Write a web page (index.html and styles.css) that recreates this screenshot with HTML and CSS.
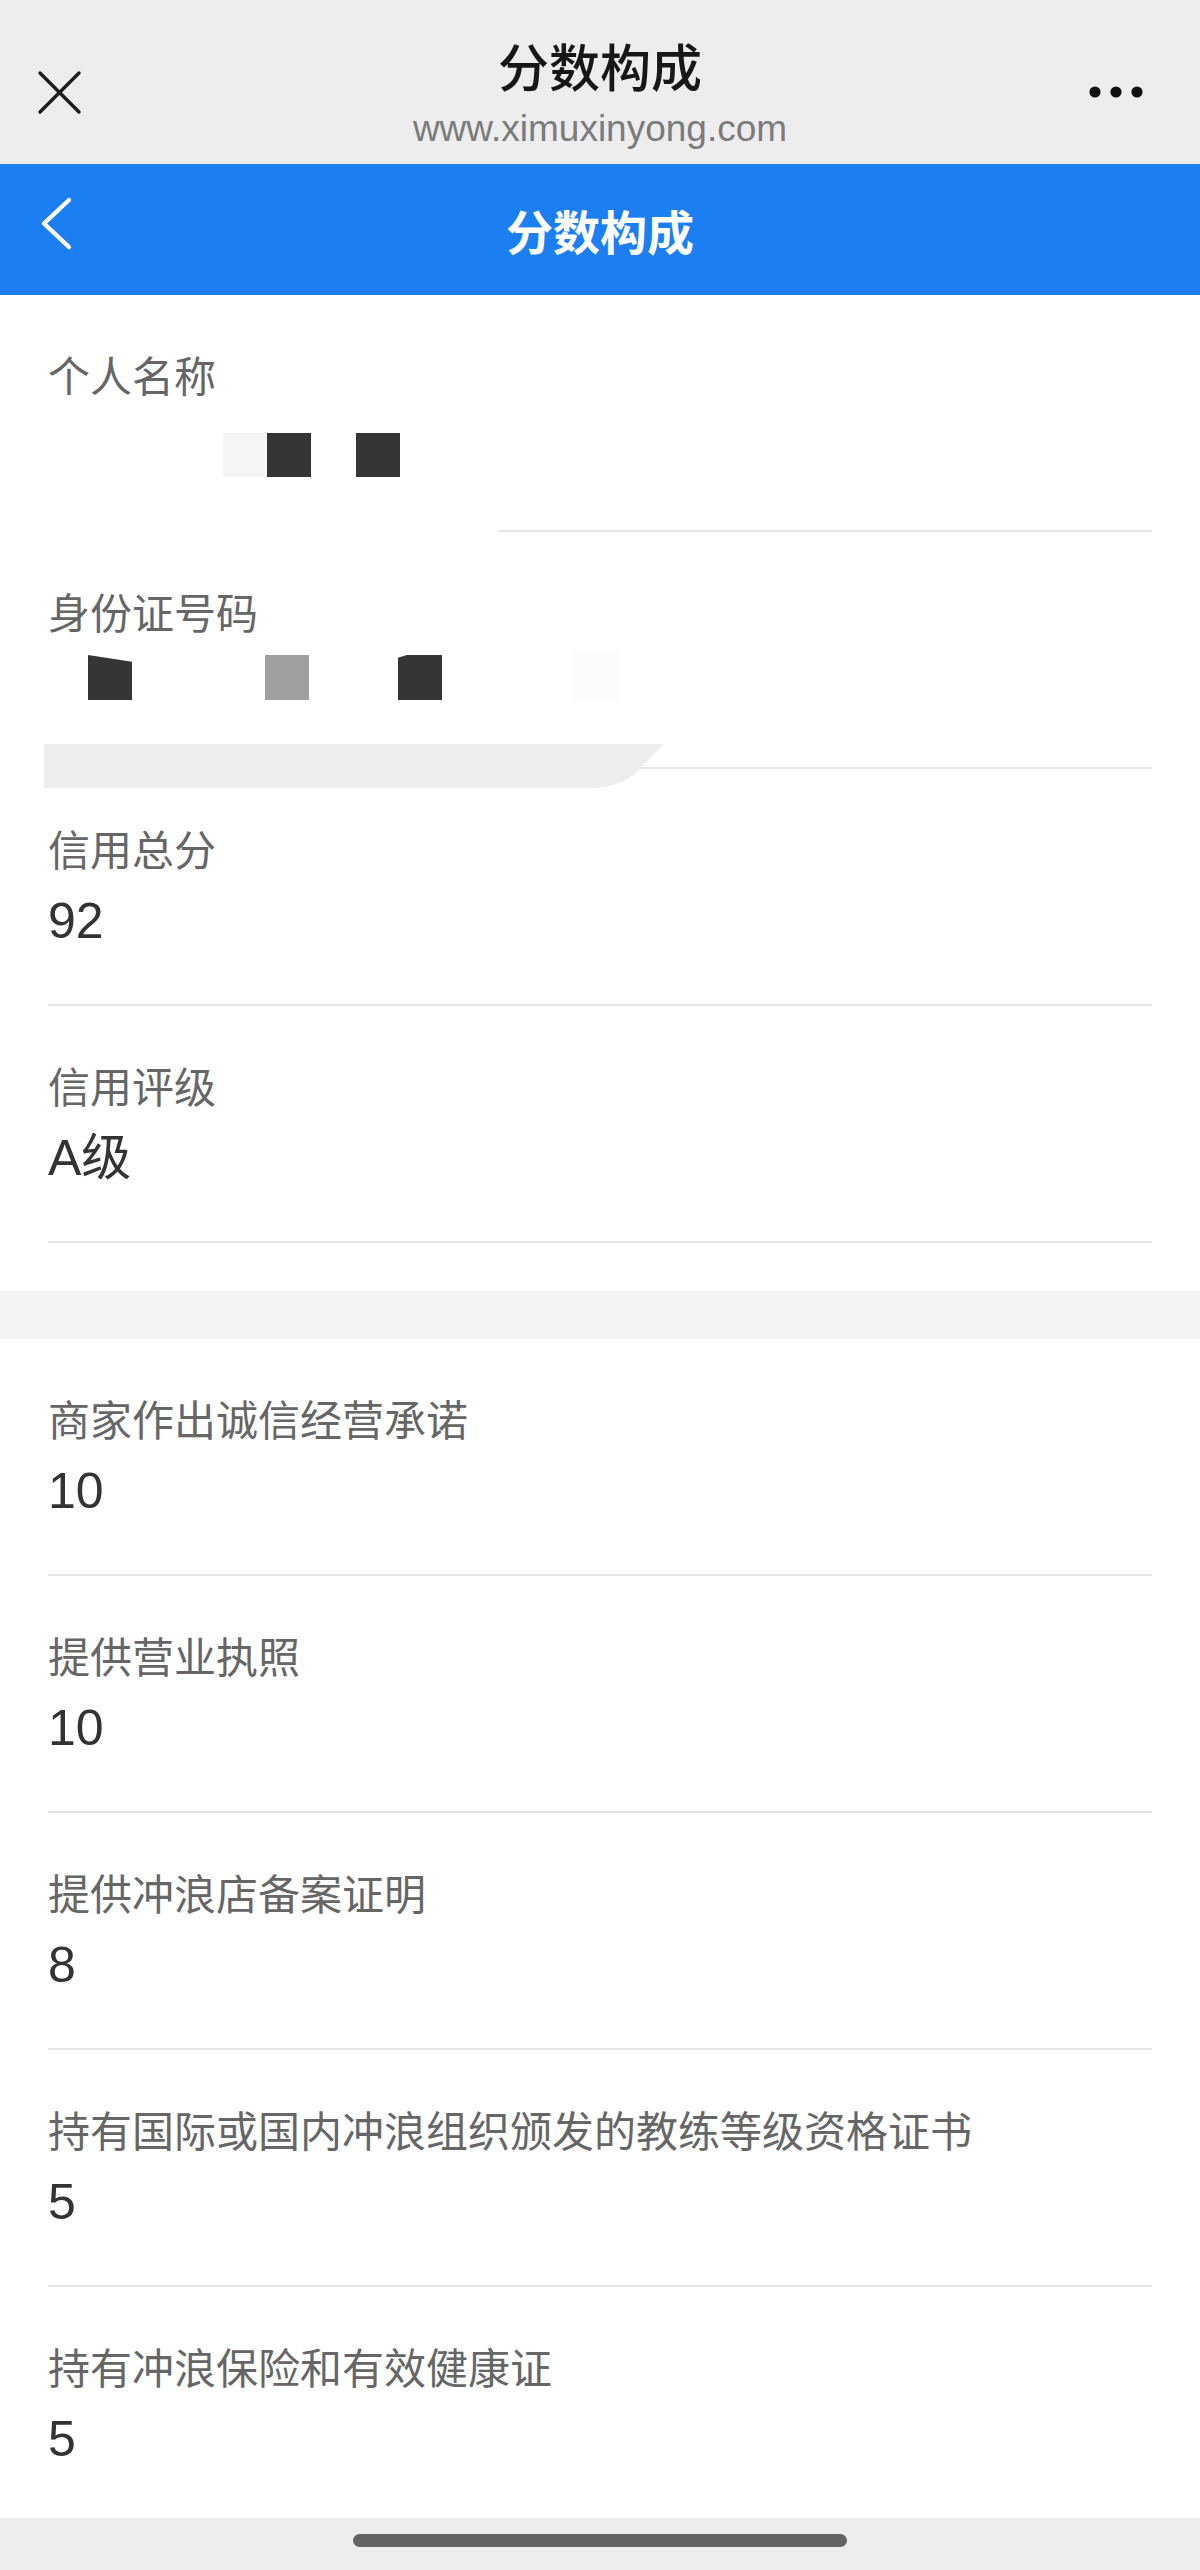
FILE: index.html
```html
<!DOCTYPE html>
<html lang="zh-CN">
<head>
<meta charset="utf-8">
<title>分数构成</title>
<link rel="stylesheet" href="styles.css">
</head>
<body>
<div class="page">
  <header class="wx-bar">
    <div class="wx-left">
      <svg class="icon-close" width="48" height="48" viewBox="0 0 48 48"><path d="M4 4 L43 43 M43 4 L4 43" stroke="#1c1c1c" stroke-width="3.4" stroke-linecap="round" fill="none"/></svg>
    </div>
    <div class="wx-center">
      <div class="wx-title">分数构成</div>
      <div class="wx-url">www.ximuxinyong.com</div>
    </div>
    <div class="wx-right">
      <svg class="icon-more" width="62" height="16" viewBox="0 0 62 16"><circle cx="9" cy="8" r="5.6" fill="#111"/><circle cx="30" cy="8" r="5.6" fill="#111"/><circle cx="51" cy="8" r="5.6" fill="#111"/></svg>
    </div>
  </header>

  <nav class="nav-bar">
    <div class="nav-left">
      <svg class="icon-back" width="34" height="58" viewBox="0 0 34 58"><path d="M29 5 L4 28.5 L29 52" stroke="#fff" stroke-width="4.4" stroke-linecap="round" stroke-linejoin="round" fill="none"/></svg>
    </div>
    <div class="nav-title">分数构成</div>
    <div class="nav-right"></div>
  </nav>

  <section class="card card-top">
    <div class="row row-a row-name">
      <div class="label">个人名称</div>
      <div class="mask mask-name">
        <span class="blk blk-light"></span><span class="blk blk-dark"></span><span class="blk blk-gap"></span><span class="blk blk-dark"></span>
      </div>
    </div>
    <div class="row row-a row-id">
      <div class="label">身份证号码</div>
      <div class="mask mask-id">
        <span class="blk blk-dark blk-slant"></span><span class="blk blk-gray"></span><span class="blk blk-dark blk-notch"></span><span class="blk blk-faint"></span>
      </div>
      <svg class="smudge" width="624" height="44" viewBox="0 0 624 44"><path d="M0 0 H620 L600 20 Q582 44 545 44 H0 Z" fill="#ededef"/></svg>
    </div>
    <div class="row row-c">
      <div class="label">信用总分</div>
      <div class="value">92</div>
    </div>
    <div class="row row-c">
      <div class="label">信用评级</div>
      <div class="value">A级</div>
    </div>
  </section>

  <div class="gap"></div>

  <section class="card card-bottom">
    <div class="row row-c">
      <div class="label">商家作出诚信经营承诺</div>
      <div class="value">10</div>
    </div>
    <div class="row row-c">
      <div class="label">提供营业执照</div>
      <div class="value">10</div>
    </div>
    <div class="row row-c">
      <div class="label">提供冲浪店备案证明</div>
      <div class="value">8</div>
    </div>
    <div class="row row-c">
      <div class="label">持有国际或国内冲浪组织颁发的教练等级资格证书</div>
      <div class="value">5</div>
    </div>
    <div class="row row-c row-last">
      <div class="label">持有冲浪保险和有效健康证</div>
      <div class="value">5</div>
    </div>
  </section>

  <div class="home-bar"><span class="home-indicator"></span></div>
</div>
</body>
</html>
```

FILE: styles.css
```css
html, body {
  margin: 0;
  padding: 0;
  background: #ffffff;
}

.page {
  width: 1200px;
  height: 2570px;
  overflow: hidden;
  display: flex;
  flex-direction: column;
  font-family: "Noto Sans CJK SC", "Liberation Sans", sans-serif;
}

/* WeChat top bar */
.wx-bar {
  height: 164px;
  flex: none;
  background: #ededed;
  display: grid;
  grid-template-columns: 1fr auto 1fr;
}

.wx-left {
  padding: 69px 0 0 36px;
}

.icon-close, .icon-more, .icon-back {
  display: block;
}

.wx-center {
  display: flex;
  flex-direction: column;
  align-items: center;
  padding-top: 40px;
}

.wx-title {
  font-family: "Noto Sans CJK SC", sans-serif;
  font-size: 51px;
  line-height: 51px;
  font-weight: 500;
  color: #171717;
}

.wx-url {
  margin-top: 19px;
  font-family: "Liberation Sans", Arial, sans-serif;
  font-size: 37px;
  line-height: 37px;
  color: #7b7b7b;
}

.wx-right {
  display: flex;
  justify-content: flex-end;
  padding: 84px 52px 0 0;
  align-items: flex-start;
}

/* Blue nav */
.nav-bar {
  height: 131px;
  flex: none;
  background: #1b7ef1;
  display: grid;
  grid-template-columns: 1fr auto 1fr;
  align-items: center;
}

.nav-left {
  padding-left: 40px;
  margin-top: -12px;
}

.nav-title {
  font-family: "Noto Sans CJK SC", sans-serif;
  font-size: 47px;
  line-height: 47px;
  font-weight: 700;
  color: #ffffff;
}

/* cards & rows */
.card {
  background: #ffffff;
  flex: none;
}

.card-top {
  padding-bottom: 48px;
}

.row {
  margin: 0 48px 0 48px;
  border-bottom: 2px solid #e6e6e6;
  box-sizing: border-box;
}

.label {
  font-family: "Noto Sans CJK SC", sans-serif;
  font-size: 42px;
  line-height: 42px;
  color: #666666;
  white-space: nowrap;
}

.value {
  font-family: "Liberation Sans", "Noto Sans CJK SC", sans-serif;
  font-size: 50px;
  line-height: 50px;
  height: 50px;
  color: #333333;
}

.row-a {
  height: 237px;
  padding-top: 58px;
  position: relative;
}

.row-name {
  border-bottom: 0;
  background: linear-gradient(#e6e6e6, #e6e6e6) no-repeat right bottom / 654px 2px;
}

.mask {
  display: flex;
  margin-top: 38px;
  height: 44px;
}

.blk {
  display: block;
  width: 44px;
  height: 44px;
  flex: none;
}

.blk-light { background: #f5f5f5; }
.blk-dark { background: #353535; }
.blk-gray { background: #a0a0a0; }
.blk-gap { width: 45px; }
.blk-faint { background: #fcfcfc; width: 48px; margin-left: 131px; }

.mask-name {
  padding-left: 175px;
}

.mask-id {
  margin-top: 23px;
  padding-left: 40px;
  height: 45px;
}

.mask-id .blk { height: 45px; }
.mask-id .blk-gray { margin-left: 133px; }
.mask-id .blk-notch { margin-left: 89px; clip-path: polygon(0 6%, 20% 0, 100% 0, 100% 100%, 0 100%); }
.blk-slant { clip-path: polygon(0 0, 100% 15%, 100% 100%, 0 100%); }
.mask-id .blk-faint { height: 52px; margin-top: -5px; }

.smudge {
  position: absolute;
  left: -4px;
  top: 212px;
  display: block;
}

.row-c {
  height: 237px;
  padding-top: 58px;
}

.row-c .value {
  margin-top: 27px;
}

.row-last {
  height: 231px;
  border-bottom: 0;
}

.gap {
  height: 48px;
  flex: none;
  background: #f4f4f4;
}

/* bottom home bar */
.home-bar {
  height: 52px;
  flex: none;
  background: #ededed;
  display: flex;
  justify-content: center;
  align-items: flex-start;
}

.home-indicator {
  display: block;
  width: 494px;
  height: 13px;
  margin-top: 16px;
  border-radius: 7px;
  background: #636363;
}
```
